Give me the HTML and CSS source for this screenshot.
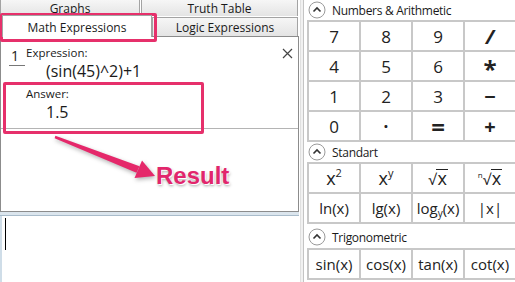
FILE: index.html
```html
<!DOCTYPE html>
<html lang="en">
<head>
    <meta charset="UTF-8">
    <title>Math Expressions</title>
    <link rel="stylesheet" href="styles.css">
</head>
<body>
    <div class="app">
        <div class="left">
            <div class="tabs">
                <div class="tab-row back">
                    <div class="tab graphs">Graphs</div>
                    <div class="tab truth">Truth Table</div>
                </div>
                <div class="tab-row front">
                    <div class="tab selected">Math Expressions</div>
                    <div class="tab logic">Logic Expressions</div>
                </div>
            </div>

            <div class="doc">
                <div class="entry">
                    <div class="num">1</div>
                    <div class="body">
                        <div class="label">Expression:</div>
                        <div class="value">(sin(45)^2)+1</div>
                        <div class="label answer">Answer:</div>
                        <div class="value">1.5</div>
                    </div>
                    <svg class="close" width="11" height="11" viewBox="0 0 11 11">
                        <path d="M1 1 L10 10 M10 1 L1 10" stroke="#444" stroke-width="1.2"/>
                    </svg>
                </div>
            </div>

            <div class="hsplit"></div>
            <div class="input"><span class="caret"></span></div>

            <!-- annotations drawn over the screenshot -->
            <div class="mark mark-tab"></div>
            <div class="mark mark-answer"></div>
            <svg class="arrow" width="300" height="282" viewBox="0 0 300 282">
                <polygon points="54.6,138.2 55.4,135.8 139.5,166.2 136.5,172.8" fill="#e5286a"/>
                <polygon points="155,176 134.5,178 142,160.5" fill="#e5286a"/>
            </svg>
            <div class="result">Result</div>
        </div>

        <div class="vsplit"></div>

        <div class="right">
            <div class="sec-head">
                <span class="chev"><svg width="18" height="18" viewBox="0 0 18 18"><circle cx="9" cy="9" r="8" fill="#fff" stroke="#9a9a9a"/><path d="M5.5 10.5 L9 7 L12.5 10.5" fill="none" stroke="#333" stroke-width="1.6"/></svg></span>
                <span>Numbers &amp; Arithmetic</span>
            </div>
            <div class="pad keys">
                <div class="key">7</div><div class="key">8</div><div class="key">9</div><div class="key op slash">/</div>
                <div class="key">4</div><div class="key">5</div><div class="key">6</div><div class="key op star"><span>*</span></div>
                <div class="key">1</div><div class="key">2</div><div class="key">3</div><div class="key op">&minus;</div>
                <div class="key">0</div><div class="key dot">&middot;</div><div class="key op eq">=</div><div class="key op">+</div>
            </div>

            <div class="sec-head">
                <span class="chev"><svg width="18" height="18" viewBox="0 0 18 18"><circle cx="9" cy="9" r="8" fill="#fff" stroke="#9a9a9a"/><path d="M5.5 10.5 L9 7 L12.5 10.5" fill="none" stroke="#333" stroke-width="1.6"/></svg></span>
                <span>Standart</span>
            </div>
            <div class="pad funcs">
                <div class="key big"><span>x<sup>2</sup></span></div>
                <div class="key big"><span>x<sup>y</sup></span></div>
                <div class="key big"><span><span class="rad">&radic;</span><span class="over">x</span></span></div>
                <div class="key big"><span><sup class="n">n</sup><span class="rad">&radic;</span><span class="over">x</span></span></div>
                <div class="key fn">ln(x)</div>
                <div class="key fn">lg(x)</div>
                <div class="key fn"><span>log<sub>y</sub>(x)</span></div>
                <div class="key fn">|x|</div>
            </div>

            <div class="sec-head trig">
                <span class="chev"><svg width="18" height="18" viewBox="0 0 18 18"><circle cx="9" cy="9" r="8" fill="#fff" stroke="#9a9a9a"/><path d="M5.5 10.5 L9 7 L12.5 10.5" fill="none" stroke="#333" stroke-width="1.6"/></svg></span>
                <span>Trigonometric</span>
            </div>
            <div class="pad funcs">
                <div class="key fn">sin(x)</div>
                <div class="key fn">cos(x)</div>
                <div class="key fn">tan(x)</div>
                <div class="key fn">cot(x)</div>
            </div>
        </div>
    </div>
</body>
</html>
```

FILE: styles.css
```css
body {
    margin: 0;
    font-family: "Open Sans", "Noto Sans", sans-serif;
    background: #fff;
    color: #1a1a1a;
    overflow: hidden;
}
.app {
    display: flex;
    width: 515px;
    height: 282px;
}
.left {
    position: relative;
    width: 300px;
    display: flex;
    flex-direction: column;
}

/* tabs */
.tabs {
    height: 36px;
    display: flex;
    flex-direction: column;
}
.tab-row {
    display: flex;
}
.tab-row.back {
    height: 16px;
}
.tab-row.front {
    height: 20px;
    align-items: flex-end;
}
.tab {
    font-size: 12px;
    text-align: center;
    background: linear-gradient(#f6f6f6, #e4e4e4);
    border: 1px solid #a3a3a3;
    border-bottom: none;
    box-sizing: border-box;
}
.graphs {
    width: 140px;
    height: 16px;
    line-height: 17px;
    border-top: none;
}
.truth {
    width: 157px;
    height: 16px;
    line-height: 18px;
    margin-left: 1px;
    border-top: none;
}
.tab.selected {
    width: 150px;
    height: 22px;
    margin-left: 2px;
    background: #fff;
    line-height: 24px;
    margin-bottom: -1px;
    position: relative;
    z-index: 1;
}
.logic {
    width: 146px;
    height: 19px;
    line-height: 20px;
}

/* document */
.doc {
    height: 176px;
    border: 1px solid #8c8c8c;
    box-sizing: border-box;
    width: 299px;
}
.entry {
    display: flex;
    padding-top: 8px;
    padding-bottom: 5px;
    border-bottom: 1px solid #b4b4b4;
}
.num {
    width: 16px;
    margin-left: 8px;
    font-size: 14px;
    line-height: 16px;
    margin-top: 3px;
    height: 18px;
    border-bottom: 1px solid #777;
    box-sizing: border-box;
    padding-left: 2px;
    align-self: flex-start;
}
.body {
    flex: 1;
    padding-left: 1px;
}
.label {
    font-size: 11.5px;
    line-height: 15px;
}
.label.answer {
    margin-top: 4px;
}
.value {
    font-size: 16px;
    line-height: 22px;
    padding-left: 20px;
}
.close {
    margin: 3px 5px 0 0;
}

.hsplit {
    height: 3px;
    background: #dbe5ed;
    border-bottom: 1px solid #a9bccb;
    width: 299px;
}
.input {
    flex: 1;
    border-left: 2px solid #cfdde8;
    width: 297px;
    padding: 2px 0 0 3px;
}
.caret {
    display: block;
    width: 1px;
    height: 32px;
    background: #000;
}

/* annotations */
.mark {
    position: absolute;
    border: 3px solid #e6306b;
    border-radius: 2px;
    box-sizing: border-box;
}
.mark-tab {
    left: 0;
    top: 13px;
    width: 157px;
    height: 29px;
}
.mark-answer {
    left: 3px;
    top: 82px;
    width: 201px;
    height: 52px;
}
.arrow {
    position: absolute;
    left: 0;
    top: 0;
    filter: drop-shadow(1px 2px 2px rgba(0,0,0,0.3));
}
.result {
    position: absolute;
    left: 156px;
    top: 162px;
    font-family: "Liberation Sans", Arial, sans-serif;
    font-weight: bold;
    font-size: 24px;
    color: #e2266c;
    text-shadow: 1px 1px 0 #fff, 1px 2px 3px rgba(0,0,0,0.35);
}

/* right panel */
.vsplit {
    width: 4px;
    background: #f1f1f1;
    border-left: 1px solid #e0e0e0;
    border-right: 1px solid #c4c4c4;
    box-sizing: border-box;
}
.right {
    flex: 1;
    padding-left: 3px;
    overflow: hidden;
}
.sec-head {
    height: 20px;
    display: flex;
    align-items: center;
    gap: 6px;
    font-size: 12px;
    letter-spacing: -0.3px;
    padding-left: 1px;
}
.sec-head.trig {
    height: 24px;
    padding-top: 2px;
    box-sizing: border-box;
}
.chev {
    display: flex;
}
.pad {
    display: grid;
    grid-template-columns: repeat(4, 50px);
    grid-auto-rows: 28px;
    gap: 2px;
    padding: 2px;
    background: #c8c8c8;
    width: 220px;
}
.key {
    background: #fff;
    display: flex;
    align-items: center;
    justify-content: center;
    font-size: 17px;
    color: #222;
}
.op {
    font-weight: bold;
    font-size: 20px;
}
.star span {
    font-size: 24px;
    line-height: 14px;
    height: 14px;
    margin-top: 6px;
}
.slash {
    font-style: italic;
}
.eq {
    font-size: 24px;
}
.dot {
    font-weight: bold;
}
.big {
    font-size: 18px;
}
.big sup {
    font-size: 11px;
    vertical-align: 8px;
    line-height: 0;
}
.big sup.n {
    font-size: 8px;
    vertical-align: 7px;
}
.rad {
    font-size: 15px;
}
.over {
    border-top: 1px solid #222;
    line-height: 17px;
    display: inline-block;
    padding: 0 1px;
}
.fn {
    font-size: 15px;
}
.fn sub {
    font-size: 10px;
    vertical-align: -3px;
    line-height: 0;
}
```
